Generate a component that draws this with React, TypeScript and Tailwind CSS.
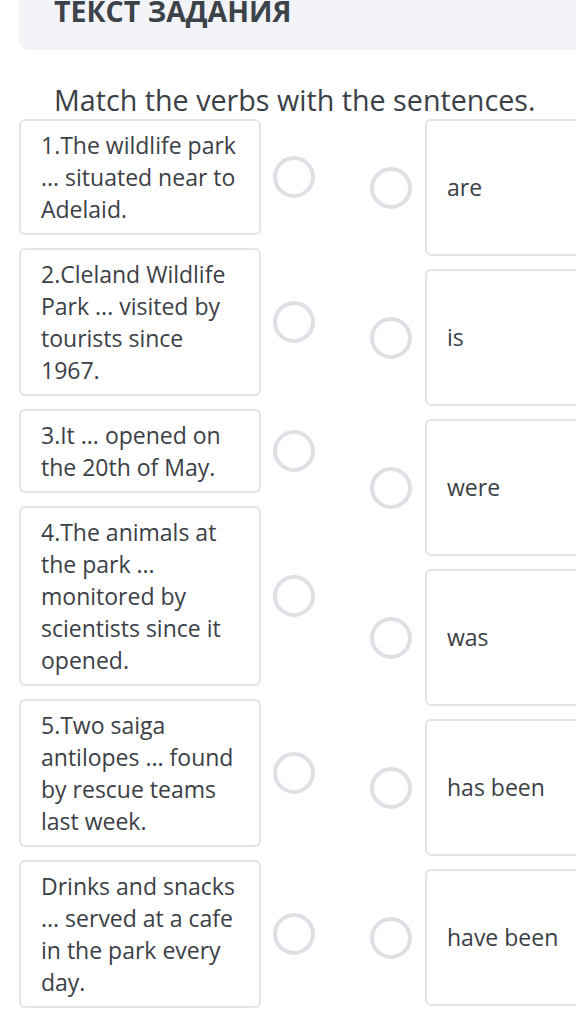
const sentences = [
  '1.The wildlife park ... situated near to Adelaid.',
  '2.Cleland Wildlife Park ... visited by tourists since 1967.',
  '3.It ... opened on the 20th of May.',
  '4.The animals at the park ... monitored by scientists since it opened.',
  '5.Two saiga antilopes ... found by rescue teams last week.',
  'Drinks and snacks ... served at a cafe in the park every day.',
];

const verbs = ['are', 'is', 'were', 'was', 'has been', 'have been'];

function Dot() {
  return <div className="h-[42px] w-[42px] shrink-0 rounded-full border-[4px] border-[#dde1e5] bg-white" />;
}

export default function App() {
  return (
    <div className="h-[1026px] w-[576px] overflow-hidden bg-white font-['Open_Sans',sans-serif] text-[#3b4046]">
      <div className="ml-[19px] flex h-[50px] flex-col rounded-bl-[10px] bg-[#f2f4f7] pl-[35px]">
        <h2 className="-mt-[5px] text-[28.5px] font-bold leading-[32px] text-[#3c424a]">ТЕКСТ ЗАДАНИЯ</h2>
      </div>

      <p className="mt-[32px] pl-[54px] text-[28.7px] leading-[36px]">Match the verbs with the sentences.</p>

      <div className="mt-[1px] flex pl-[19px]">
        <div className="flex w-[296px] shrink-0 flex-col gap-[13px]">
          {sentences.map((s) => (
            <div key={s} className="flex items-center gap-[12px]">
              <div className="w-[242px] shrink-0 rounded-[6px] border-2 border-[#e2e5e8] px-[20px] py-[8px] text-[23px] leading-[32px]">
                {s}
              </div>
              <Dot />
            </div>
          ))}
        </div>

        <div className="ml-[55px] flex flex-col gap-[13px]">
          {verbs.map((v) => (
            <div key={v} className="flex items-center gap-[13px]">
              <Dot />
              <div className="flex h-[137px] w-[220px] shrink-0 items-center rounded-[6px] border-2 border-[#e2e5e8] px-[20px] text-[23px]">
                {v}
              </div>
            </div>
          ))}
        </div>
      </div>
    </div>
  );
}
